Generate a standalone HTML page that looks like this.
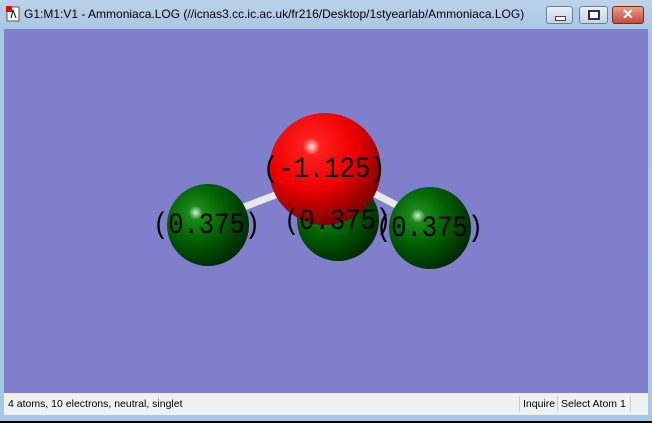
<!DOCTYPE html><html><head><style>
body{margin:0;width:652px;height:423px;overflow:hidden;background:#000;font-family:"Liberation Sans",sans-serif}
.win{position:absolute;left:0;top:0;width:652px;height:421px;background:linear-gradient(#bcd3ea,#a8c6e4 30px,#a9c8e6);}
.title{position:absolute;left:24px;top:7px;font-size:12px;color:#000}
.btn{position:absolute;top:6px;height:16px;border:1px solid #6d7f96;border-radius:3px;background:linear-gradient(#e8eff8,#c3d3e6)}
.vp{position:absolute;left:4px;top:29px;width:644px;height:364px;background:#7f7fcb;overflow:hidden}
.sb{position:absolute;left:4px;top:393px;width:644px;height:22px;background:#f0f0f0;font-size:10.5px}
.lbl{position:absolute;font-family:"Liberation Mono",monospace;font-size:25.5px;line-height:30px;color:#000;white-space:nowrap;transform:scaleY(1.15);transform-origin:0 50%}
</style></head><body>
<div class="win">
<svg style="position:absolute;left:6px;top:6px" width="14" height="16"><rect x="1" y="1" width="12" height="14" fill="#fff" stroke="#555"/><rect x="0" y="0" width="6" height="6" fill="#e00"/><path d="M7 4 L5 12 M7 4 L10 12" stroke="#000"/></svg>
<div class="title">G1:M1:V1 - Ammoniaca.LOG (//icnas3.cc.ic.ac.uk/fr216/Desktop/1styearlab/Ammoniaca.LOG)</div>
<div class="btn" style="left:546px;width:25px"><div style="position:absolute;left:8px;top:9px;width:9px;height:3px;background:#fff;border:1px solid #445"></div></div>
<div class="btn" style="left:579px;width:27px"><div style="position:absolute;left:8px;top:3px;width:8px;height:6px;border:2px solid #334;background:#fff"></div></div>
<div class="btn" style="left:612px;width:30px;background:linear-gradient(#e8a090,#c8483a);border-color:#7a2a20"><div style="position:absolute;left:9px;top:-1px;color:#fff;font-weight:bold;font-size:14px">✕</div></div>
<div class="vp">
<svg width="644" height="364" style="position:absolute;left:0;top:0">
<defs>
<radialGradient id="g" cx="0.35" cy="0.35" r="0.7"><stop offset="0" stop-color="#d8f0d8"/><stop offset="0.12" stop-color="#1a8a1a"/><stop offset="0.5" stop-color="#006000"/><stop offset="1" stop-color="#002800"/></radialGradient>
<radialGradient id="r" cx="0.38" cy="0.3" r="0.75"><stop offset="0" stop-color="#ffe0e0"/><stop offset="0.1" stop-color="#ff2020"/><stop offset="0.5" stop-color="#f00000"/><stop offset="1" stop-color="#700000"/></radialGradient>
</defs>
<circle cx="334" cy="191" r="41" fill="url(#g)"/>
<line x1="300" y1="155" x2="240" y2="178" stroke="#e8e8e8" stroke-width="7"/>
<line x1="352" y1="155" x2="400" y2="180" stroke="#e8e8e8" stroke-width="7"/>
<circle cx="204" cy="196" r="41" fill="url(#g)"/>
<circle cx="426" cy="199" r="41" fill="url(#g)"/>
<circle cx="321" cy="140" r="56" fill="url(#r)"/>
</svg>
<div class="lbl" style="left:259px;top:126px">(-1.125)</div>
<div class="lbl" style="left:280px;top:178px">(0.375)</div>
<div class="lbl" style="left:149px;top:182px">(0.375)</div>
<div class="lbl" style="left:372px;top:185px">(0.375)</div>
</div>
<div class="sb">
<div style="position:absolute;left:4px;top:5px">4 atoms, 10 electrons, neutral, singlet</div>
<div style="position:absolute;left:515px;top:3px;height:16px;border-left:1px solid #ccc"></div>
<div style="position:absolute;left:519px;top:5px">Inquire</div>
<div style="position:absolute;left:553px;top:3px;height:16px;border-left:1px solid #ccc"></div>
<div style="position:absolute;left:557px;top:5px">Select Atom 1</div>
<div style="position:absolute;left:626px;top:3px;height:16px;border-left:1px solid #ccc"></div>
</div>
</div>
</body></html>
